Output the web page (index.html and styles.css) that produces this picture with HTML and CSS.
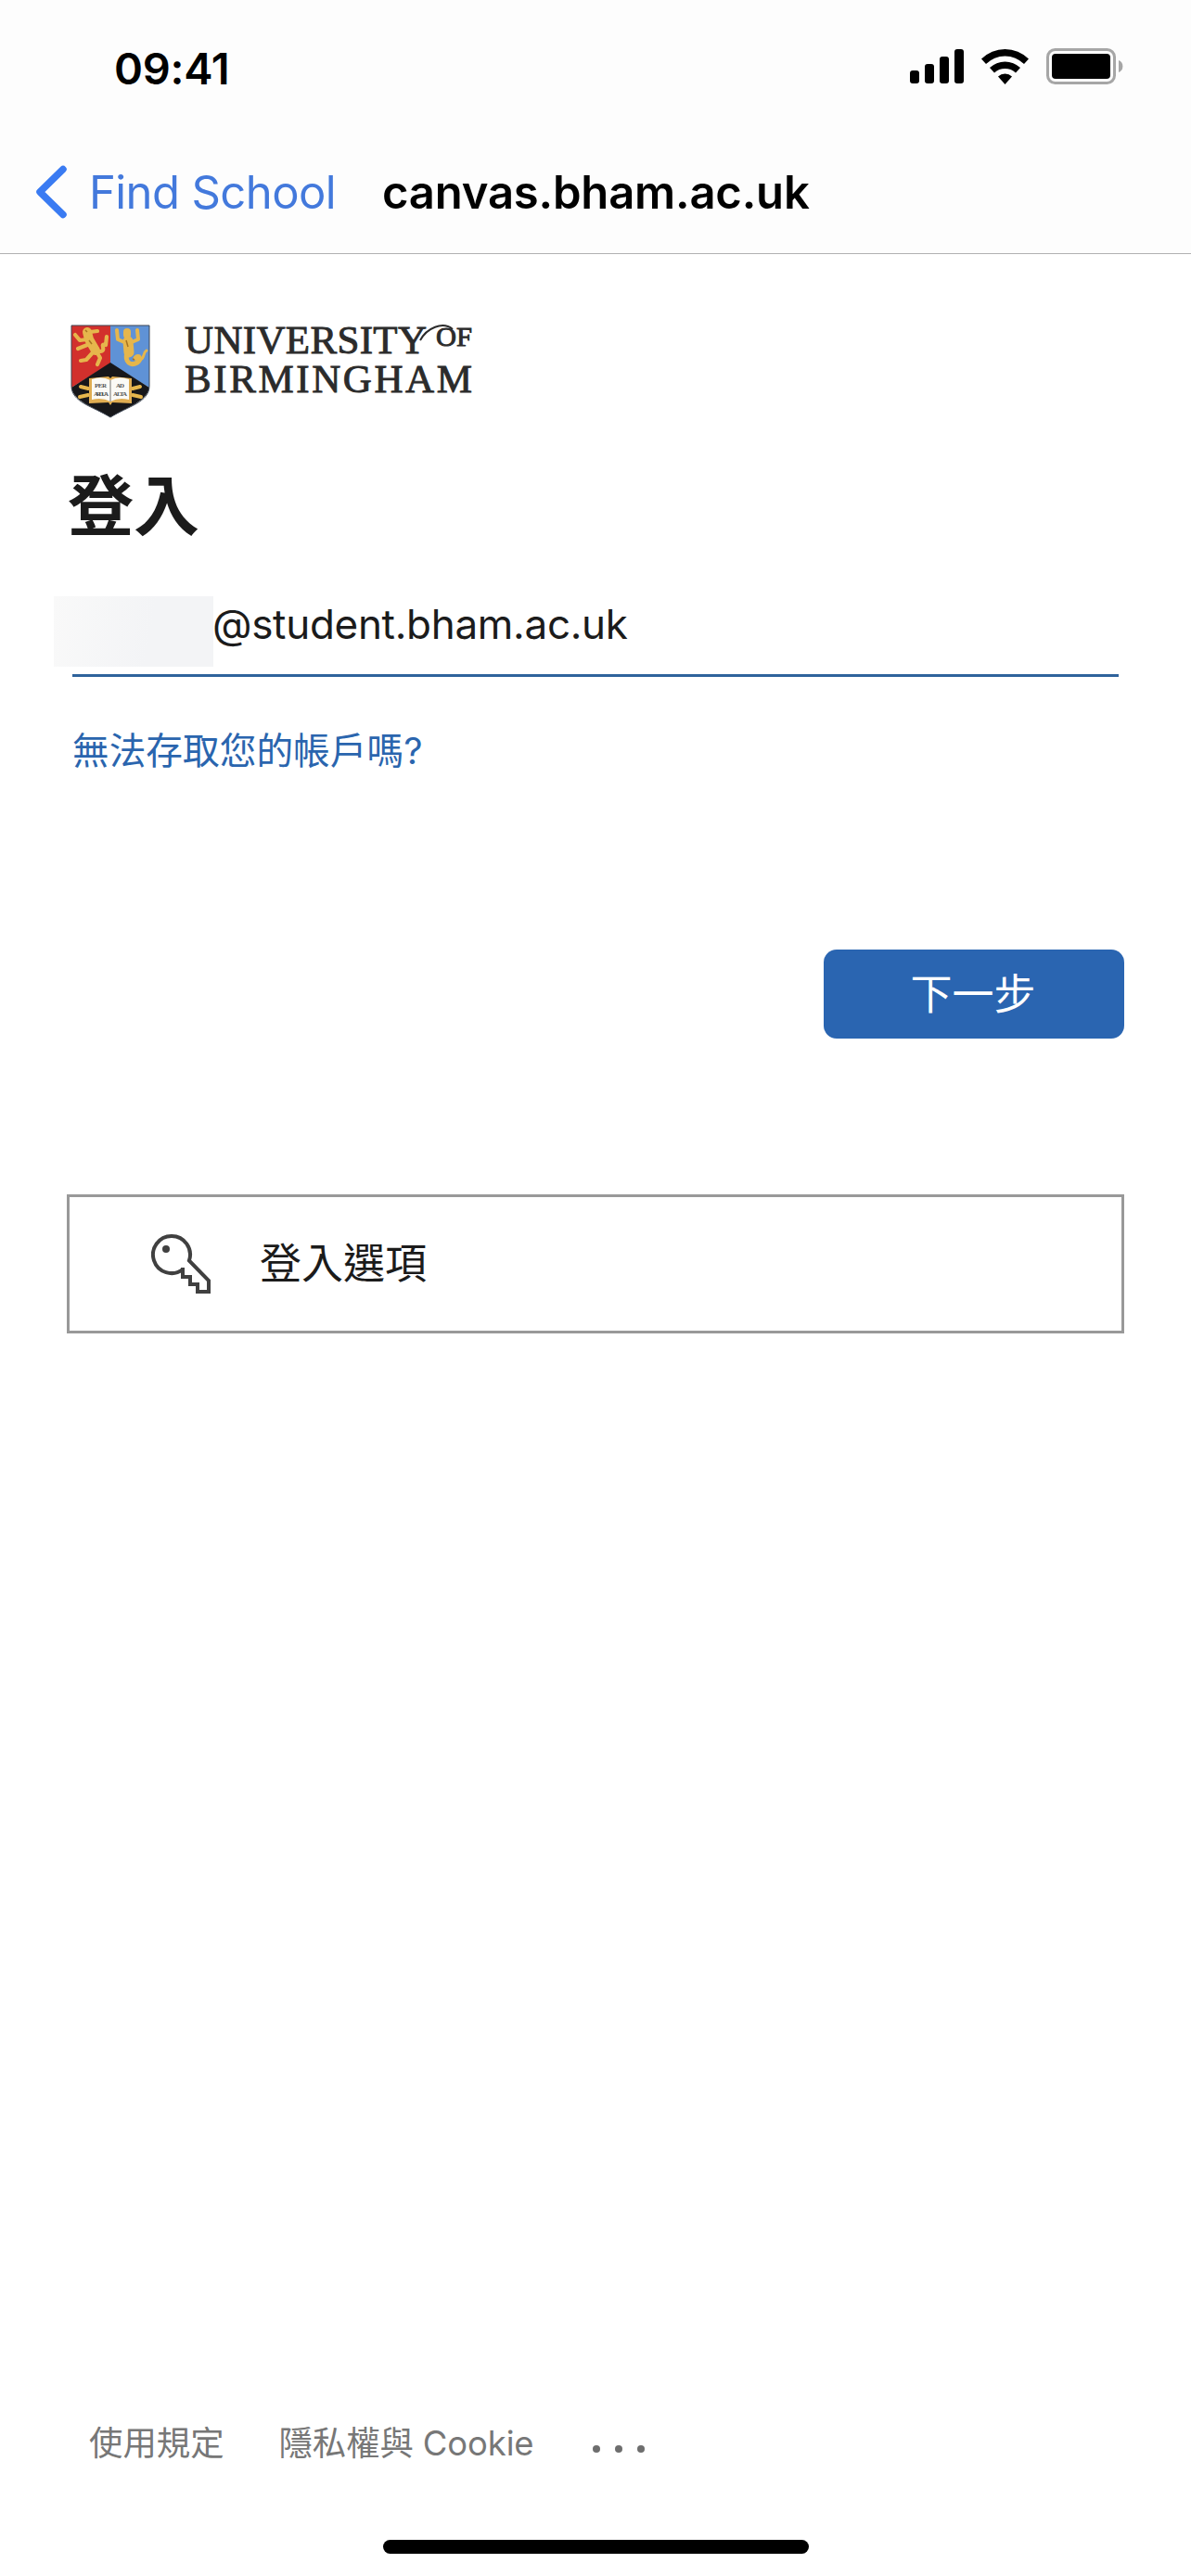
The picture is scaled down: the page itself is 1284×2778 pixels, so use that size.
FILE: index.html
```html
<!DOCTYPE html>
<html lang="zh-Hant">
<head>
<meta charset="utf-8">
<title>登入</title>
<link rel="stylesheet" href="styles.css">
</head>
<body>
<div class="screen">
  <header class="top">
    <div class="status">
      <span class="time">09:41</span>
      <svg class="status-icons" width="232" height="44" viewBox="980 50 232 44">
        <rect x="981" y="76" width="10" height="14" rx="3"/>
        <rect x="997" y="69" width="10" height="21" rx="3"/>
        <rect x="1013" y="61" width="10" height="29" rx="3"/>
        <rect x="1029" y="53" width="10" height="37" rx="3"/>
        <path d="M1058 63.500A36 36 0 0 1 1109 63.500L1104 69A29 29 0 0 0 1063 69Z"/>
        <path d="M1067 73A24 24 0 0 1 1100 73L1095 78.500A17 17 0 0 0 1072 78.500Z"/>
        <path d="M1076 82.500A11 11 0 0 1 1091 82.500L1083.500 91Z"/>
        <rect x="1129.500" y="53.500" width="72" height="36" rx="8" fill="none" stroke="#a6a6a6" stroke-width="3"/>
        <rect x="1134" y="58" width="63" height="27" rx="4"/>
        <path d="M1206 65a7 7 0 0 1 0 13z" fill="#a6a6a6"/>
      </svg>
    </div>
    <nav class="nav">
      <a class="back">
        <svg width="34" height="58" viewBox="0 0 34 58"><path d="M30 4.500L5 29L30 53.500" fill="none" stroke="#3a7bf2" stroke-width="7.500" stroke-linecap="round" stroke-linejoin="round"/></svg>
        <span class="back-label">Find School</span>
      </a>
      <span class="nav-title">canvas.bham.ac.uk</span>
    </nav>
  </header>
  <main class="content">
    <svg class="logo" width="450" height="120" viewBox="72 335 450 120">
      <path d="M77 351H119V392L77 418Z" fill="#d2302c"/>
      <path d="M119 351H161V418L119 392Z" fill="#5f92d6"/>
      <path d="M119 391L161 418C159 432 138 439 119 450C100 439 79 432 77 418Z" fill="#17171a"/>
      <path d="M77 351H161V416C161 434 138 438 119 450C100 438 77 434 77 416Z" fill="none" stroke="#3c4654" stroke-width="1"/>
      <g fill="none" stroke="#e6b64c" stroke-linecap="round" stroke-linejoin="round">
        <path d="M94 358L96 366L103 378" stroke-width="10"/>
        <path d="M94 366L86 367L81 361M94 372L84 376M101 379L93 388L87 389M104 379L108 386L105 393M97 358L105 357M108 379C116 378 106 370 114 372L115 363" stroke-width="4.200"/>
        <path d="M137 358V361" stroke-width="8"/>
        <path d="M138 368L139 380" stroke-width="11"/>
        <path d="M134 369L127 366L126 356M142 369L149 366L148 356" stroke-width="4"/>
        <path d="M137 380C134 391 141 395 148 391C153 387 150 382 146 386" stroke-width="5"/>
        <path d="M151 388C157 386 153 381 158 378" stroke-width="3"/>
        <path d="M87 417L95 419M86 428L95 426M151 417L143 419M152 428L143 426" stroke-width="4"/>
      </g>
      <path d="M92 356l2 2M96 367l3 4M136 367l2 7M143 387l2 1" stroke="#a87322" stroke-width="1.500"/>
      <path d="M96 408L117 406L119 408L121 406L142 408V435L121 434L119 437L117 434L96 435Z" fill="#e0ad52"/>
      <path d="M99 409Q110 405 119 410Q128 405 139 409V431Q128 428 119 433Q110 428 99 431Z" fill="#fbfaf6"/>
      <path d="M119 410V433" stroke="#8c8a88" stroke-width="1.200"/>
      <g class="motto"><text x="102" y="418" textLength="13">PER</text><text x="125" y="418" textLength="9">AD</text><text x="101" y="427" textLength="16">ARDUA</text><text x="122" y="427" textLength="15">ALTA</text></g>
      <g class="wordmark">
        <text x="199" y="381" textLength="261" lengthAdjust="spacing">UNIVERSITY</text>
        <text x="470" y="373" font-size="29" textLength="39" lengthAdjust="spacingAndGlyphs">OF</text>
        <text x="199" y="423" textLength="310" lengthAdjust="spacing">BIRMINGHAM</text>
      </g>
      <path d="M453 367C460 354 477 346 488 355" fill="none" stroke="#2b2b2b" stroke-width="2"/>
    </svg>
    <h1 class="heading">登入</h1>
    <div class="field">
      <span class="redacted"></span>
      <span class="email">@student.bham.ac.uk</span>
    </div>
    <a class="help">無法存取您的帳戶嗎?</a>
    <div class="actions"><button class="next">下一步</button></div>
    <div class="options">
      <svg class="key" width="64" height="64" viewBox="0 0 64 64" fill="none" stroke="#404040" stroke-width="4">
        <path d="M34 38A20 20 0 1 1 40.900 28.500L62 50V62H50V54H42V46H34V36"/>
        <circle cx="16" cy="16" r="4" fill="#404040" stroke="none"/>
      </svg>
      <span>登入選項</span>
    </div>
  </main>
  <footer class="footer">
    <a class="terms">使用規定</a>
    <a class="privacy">隱私權與 Cookie</a>
    <span class="more"><i></i><i></i><i></i></span>
  </footer>
  <div class="home"></div>
</div>
</body>
</html>
```
FILE: styles.css
```css
* { box-sizing: border-box; }
body {
  margin: 0;
  background: #fff;
  color: #1b1b1b;
  font-family: Inter, "Noto Sans CJK TC", sans-serif;
}
.screen {
  width: 1284px;
  height: 2778px;
  display: flex;
  flex-direction: column;
  overflow: hidden;
}
.top {
  height: 274px;
  flex: none;
  background: #fdfdfd;
  border-bottom: 1px solid #b0b0b2;
}
.status {
  height: 141px;
  padding: 50px 72px 0 123px;
  display: flex;
  justify-content: space-between;
  align-items: flex-start;
  color: #000;
}
.time {
  font-size: 47px;
  font-weight: 600;
  line-height: 48px;
  letter-spacing: -0.3px;
}
.nav {
  height: 132px;
  padding-left: 38px;
  display: flex;
  align-items: center;
  font-size: 49px;
  line-height: 60px;
}
.back { display: flex; align-items: center; width: 374px; color: #4379dc; }
.back-label { margin: 2px 0 0 24px; white-space: nowrap; letter-spacing: -0.6px; }
.nav-title { margin-top: 2px; color: #000; font-weight: 600; letter-spacing: -0.2px; }
.content { padding: 61px 72px 0; flex: 1; display: flex; flex-direction: column; }
.logo { display: block; flex: none; }
.motto { font: bold 7px "Liberation Serif", serif; fill: #555; }
.wordmark { font-family: "Liberation Serif", serif; font-size: 43px; fill: #2b2b2b; stroke: #2b2b2b; stroke-width: .9px; }
.heading {
  margin: 33px 0 0 1px;
  font-size: 71px;
  line-height: 104px;
  font-weight: 700;
  font-family: "Noto Sans CJK TC", sans-serif;
}
.field {
  height: 87px;
  margin: 51px 6px 0;
  border-bottom: 3px solid #2f639c;
  display: flex;
  align-items: flex-start;
}
.redacted {
  width: 172px;
  height: 76px;
  margin-left: -20px;
  background: linear-gradient(100deg, #f9f9f9, #f3f4f6 60%);
}
.email { margin-left: -1px; font-size: 44px; line-height: 60px; letter-spacing: -0.3px; white-space: nowrap; }
.help {
  margin: 50px 0 0 6px;
  font-size: 39.700px;
  line-height: 60px;
  color: #2a65ae;
}
.actions { margin-top: 184px; display: flex; justify-content: flex-end; }
.next {
  width: 324px;
  height: 96px;
  padding: 0 2px 4px 0;
  border: 0;
  border-radius: 14px;
  background: #2a65b1;
  color: #fff;
  font: 45px/90px "Noto Sans CJK TC", sans-serif;
}
.options {
  height: 150px;
  margin-top: 168px;
  padding-left: 88px;
  border: 3px solid #999;
  display: flex;
  align-items: center;
  font-size: 45px;
}
.options span { margin: 0 0 7px 53px; }
.footer {
  height: 50px;
  flex: none;
  display: flex;
  align-items: center;
  padding-left: 96px;
  font-size: 36.400px;
  line-height: 50px;
  color: #777;
}
.privacy { margin-left: 59px; letter-spacing: -0.1px; }
.more { display: flex; gap: 16px; margin: 12px 0 0 64px; }
.more i { width: 8px; height: 8px; border-radius: 50%; background: #6e6e6e; }
.home {
  width: 459px;
  height: 15px;
  flex: none;
  margin: 79px auto 24px;
  border-radius: 8px;
  background: #000;
}
```
